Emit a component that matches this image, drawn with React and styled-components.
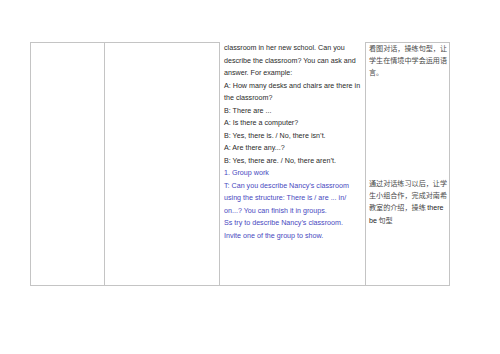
import React from "react";
import styled, { createGlobalStyle } from "styled-components";

const Global = createGlobalStyle`
  html, body { margin: 0; padding: 0; background: #fff; }
  body { width: 500px; height: 354px; overflow: hidden; }
`;

const Page = styled.div`
  padding: 42px 0 0 30px;
`;

const Table = styled.div`
  display: grid;
  grid-template-columns: 74px 115px 146px 85px;
  width: 421px;
  height: 244px;
  box-sizing: border-box;
`;

const Cell = styled.div`
  box-sizing: border-box;
  border-left: 1px solid #c4c4c4;
  border-bottom: 1px solid #c4c4c4;
  border-top: ${(p) => (p.$open ? "none" : "1px solid #c4c4c4")};
  border-right: ${(p) => (p.$last ? "1px solid #c4c4c4" : "none")};
  padding: ${(p) => p.$pad || "0"};
  overflow: hidden;
`;

const Line = styled.div`
  font-family: "Liberation Sans", Arial, sans-serif;
  font-size: 7.15px;
  line-height: 12.5px;
  color: ${(p) => (p.$blue ? "#4848c0" : "#2a2a2a")};
  white-space: nowrap;
`;

const Note = styled.div`
  font-family: "Noto Sans CJK SC", sans-serif;
  font-size: 7.1px;
  line-height: 11.8px;
  color: #4a4a4a;
  white-space: nowrap;
  margin-top: ${(p) => p.$top || "0"};
`;

const Latin = styled.span`
  font-family: "Liberation Sans", Arial, sans-serif;
  color: #222;
`;

const black = [
  "classroom in her new school. Can you",
  "describe the classroom? You can ask and",
  "answer. For example:",
  "A: How many desks and chairs are there in",
  "the classroom?",
  "B: There are ...",
  "A: Is there a computer?",
  "B: Yes, there is. / No, there isn\u2019t.",
  "A: Are there any...?",
  "B: Yes, there are. / No, there aren\u2019t.",
];

const blue = [
  "1. Group work",
  "T: Can you describe Nancy\u2019s classroom",
  "using the structure: There is / are ... in/",
  "on...? You can finish it in groups.",
  "Ss try to describe Nancy\u2019s classroom.",
  "Invite one of the group to show.",
];

export default function App() {
  return (
    <>
      <Global />
      <Page>
        <Table>
          <Cell />
          <Cell />
          <Cell $open $pad="0 0 0 4px">
            {black.map((t) => (
              <Line key={t}>{t}</Line>
            ))}
            {blue.map((t) => (
              <Line key={t} $blue>
                {t}
              </Line>
            ))}
          </Cell>
          <Cell $last $pad="0 0 0 3px">
            <Note>
              看图对话，操练句型，让<br />
              学生在情境中学会运用语<br />
              言。
            </Note>
            <Note $top="100px">
              通过对话练习以后，让学<br />
              生小组合作，完成对南希<br />
              教室的介绍，操练 <Latin>there</Latin>
              <br />
              <Latin>be</Latin> 句型
            </Note>
          </Cell>
        </Table>
      </Page>
    </>
  );
}
